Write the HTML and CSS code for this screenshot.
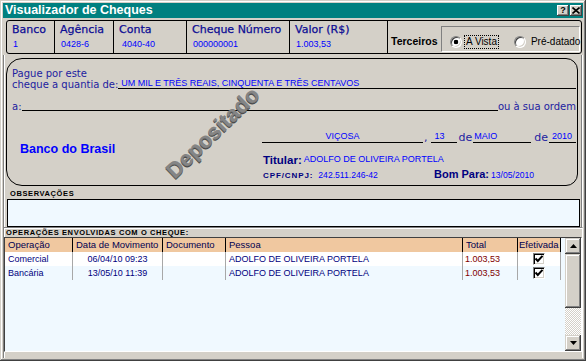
FILE: index.html
```html
<!DOCTYPE html>
<html>
<head>
<meta charset="utf-8">
<title>Visualizador de Cheques</title>
<link rel="stylesheet" href="styles.css">
</head>
<body>
<div class="window">
  <div class="titlebar">
    <span class="title">Visualizador de Cheques</span>
    <div class="tbtns">
      <span class="tbtn">?</span>
      <span class="tbtn"><svg width="8" height="7" viewBox="0 0 8 7"><path d="M0.5 0.5 L7.5 6.5 M7.5 0.5 L0.5 6.5" stroke="#000" stroke-width="1.6"/></svg></span>
    </div>
  </div>
  <div class="client">
    <div class="hdr">
      <div class="hcol w1"><div class="hlabel">Banco</div><div class="hval">1</div></div>
      <div class="hcol w2"><div class="hlabel">Agência</div><div class="hval">0428-6</div></div>
      <div class="hcol w3"><div class="hlabel">Conta</div><div class="hval">4040-40</div></div>
      <div class="hcol w4"><div class="hlabel">Cheque Número</div><div class="hval">000000001</div></div>
      <div class="hcol w5"><div class="hlabel">Valor (R$)</div><div class="hval">1.003,53</div></div>
      <div class="hcol terc">
        <span class="terc-label">Terceiros</span>
        <div class="radiobox">
          <span class="radio on"></span><span class="rlabel focus">A Vista</span>
          <span class="radio r2"></span><span class="rlabel">Pré-datado</span>
        </div>
      </div>
    </div>

    <div class="mainp">
      <div class="cheque">
        <div class="ln1">Pague por este</div>
        <div class="ln2"><span class="lbl">cheque a quantia de:</span><div class="fld amt">UM MIL E TRÊS REAIS, CINQUENTA E TRÊS CENTAVOS</div></div>
        <div class="ln3"><span class="lbl">a:</span><div class="fld"></div><span class="lbl">ou à sua ordem</span></div>
        <div class="ln4">
          <div class="bank">Banco do Brasil</div>
          <div class="rcol">
            <div class="date">
              <div class="fld dfld city">VIÇOSA</div><span class="dsep comma">,</span>
              <div class="fld dfld day">13</div><span class="dsep de1">de</span>
              <div class="fld dfld month">MAIO</div><span class="dsep de2">de</span>
              <div class="fld dfld year">2010</div>
            </div>
            <div class="titular"><span class="blbl">Titular:</span><span class="val">ADOLFO DE OLIVEIRA PORTELA</span></div>
            <div class="cpfrow">
              <div class="cpfgrp"><span class="tiny navy">CPF/CNPJ:</span><span class="val num">242.511.246-42</span></div>
              <span class="blbl2">Bom Para:</span><span class="val num bp">13/05/2010</span>
            </div>
          </div>
        </div>
        <div class="stamp">Depositado</div>
      </div>
      <div class="tiny obs-label">OBSERVAÇÕES</div>
      <div class="obs"></div>
    </div>

    <div class="opsp">
      <div class="tiny ops-label">OPERAÇÕES ENVOLVIDAS COM O CHEQUE:</div>
      <div class="grid">
        <div class="gtable">
          <div class="grow ghead">
            <div>Operação</div><div>Data de Movimento</div><div>Documento</div><div>Pessoa</div><div>Total</div><div class="hef">Efetivada</div>
          </div>
          <div class="grow gr sel">
            <div>Comercial</div><div class="c">06/04/10 09:23</div><div></div><div>ADOLFO DE OLIVEIRA PORTELA</div><div class="tot">1.003,53</div><div class="cb"><span class="chk"><svg width="10" height="10" viewBox="0 0 10 10"><path d="M1.5 4.5 L3.8 7 L8.5 1.8" fill="none" stroke="#000" stroke-width="2"/></svg></span></div>
          </div>
          <div class="grow gr">
            <div>Bancária</div><div class="c">13/05/10 11:39</div><div></div><div>ADOLFO DE OLIVEIRA PORTELA</div><div class="tot">1.003,53</div><div class="cb"><span class="chk"><svg width="10" height="10" viewBox="0 0 10 10"><path d="M1.5 4.5 L3.8 7 L8.5 1.8" fill="none" stroke="#000" stroke-width="2"/></svg></span></div>
          </div>
        </div>
        <div class="sbar">
          <div class="sbtn"><svg width="7" height="4" viewBox="0 0 7 4"><path d="M3.5 0 L7 4 L0 4 Z" fill="#000"/></svg></div>
          <div class="thumb"></div>
          <div class="track"></div>
          <div class="sbtn"><svg width="7" height="4" viewBox="0 0 7 4"><path d="M0 0 L7 0 L3.5 4 Z" fill="#000"/></svg></div>
        </div>
      </div>
    </div>
  </div>
</div>
</body>
</html>
```
FILE: styles.css
```css
* { box-sizing: border-box; margin: 0; padding: 0; }
html, body { width: 586px; height: 361px; overflow: hidden; }
body { background: #d4d0c8; font-family: "DejaVu Sans", sans-serif; }

.window {
  width: 586px; height: 361px; padding: 3px;
  display: flex; flex-direction: column;
  background: #d4d0c8;
  box-shadow: inset -1px -1px 0 #404040, inset 1px 1px 0 #d4d0c8, inset -2px -2px 0 #808080, inset 2px 2px 0 #fff;
}
.titlebar {
  height: 15px; flex: none; background: #008080;
  display: flex; align-items: center; justify-content: space-between;
  padding: 0 1px 0 2px;
}
.title { font: bold 12.5px/15px "Liberation Sans", sans-serif; color: #fff; }
.tbtns { display: flex; gap: 1px; }
.tbtn {
  width: 12px; height: 11px; display: flex; align-items: center; justify-content: center;
  background: #d4d0c8;
  box-shadow: inset -1px -1px 0 #404040, inset 1px 1px 0 #fff, inset -2px -2px 0 #808080;
  font: bold 9px/1 "Liberation Sans", sans-serif; color: #000;
}

.client { flex: 1; display: flex; flex-direction: column; }

/* header strip */
.hdr {
  height: 34px; flex: none; margin: 2px 1px 0 3px;
  border: 1px solid #000; border-radius: 3px; display: flex;
}
.hcol { border-right: 1px solid #000; }
.w1 { width: 48px; } .w2 { width: 59px; } .w3 { width: 73px; } .w4 { width: 103px; } .w5 { width: 98px; }
.hlabel { font: 11px/13px "DejaVu Sans", sans-serif; color: #0c0c94; -webkit-text-stroke: 0.25px #0c0c94; padding: 2px 0 0 5px; white-space: nowrap; }
.hval { font: 9px/10px "Liberation Sans", sans-serif; color: #0000ff; margin-top: 3px; padding-left: 6px; white-space: nowrap; }
.w3 .hval { padding-left: 8px; }
.hcol.terc { flex: 1; border-right: none; display: flex; align-items: flex-start; }
.terc-label { font: bold 10.5px/12px "Liberation Sans", sans-serif; color: #000; margin: 14px 0 0 3px; }
.radiobox {
  margin: 5px 1px 0 auto; width: 139px; height: 26px;
  border: 1px solid; border-color: #808080 #fff #fff #808080;
  display: flex; align-items: center; padding: 5px 0 0 8px;
}
.radio {
  width: 12px; height: 12px; border-radius: 50%; flex: none;
  background: #fff;
  border: 1px solid; border-color: #808080 #fff #fff #808080;
  box-shadow: inset 1px 1px 0 #404040, inset -1px -1px 0 #d4d0c8;
}
.radio.on { background: radial-gradient(circle, #000 0 2px, #fff 2.6px); }
.radio.r2 { margin-left: 16px; }
.rlabel { font: 10px/12px "Liberation Sans", sans-serif; color: #000; margin-left: 3px; padding: 0 1px; white-space: nowrap; }
.r2 + .rlabel { margin-left: 4px; }
.focus { outline: 1px dotted #000; }

/* main panel */
.mainp {
  height: 172px; flex: none; margin-top: 1px;
  border-left: 1px solid #808080; border-right: 1px solid #fff;
  box-shadow: inset 1px 0 0 #fff, inset -1px 0 0 #808080;
  display: flex; flex-direction: column; padding: 3px 4px 0 2px;
}
.cheque {
  height: 128px; flex: none; position: relative;
  border: 1px solid #000; border-radius: 16px 12px 12px 16px;
  padding: 9px 1px 0 5px;
}
.ln1, .lbl { font: 10px/11px "DejaVu Sans", sans-serif; color: #1c1ca0; white-space: nowrap; }
.ln2, .ln3 { display: flex; height: 11px; }
.ln3 { margin-top: 11px; }
.fld { border-bottom: 1px solid #000; flex: 1; height: 10px; }
.amt { font: 9px/8px "Liberation Sans", sans-serif; color: #0000ff; padding-left: 3px; white-space: nowrap; }
.ln4 { display: flex; }
.bank { width: 250px; flex: none; padding: 30px 0 0 8px; font: bold 12.5px/14px "Liberation Sans", sans-serif; color: #0000ff; white-space: nowrap; }
.rcol { flex: 1; padding-top: 19px; }
.date { display: flex; align-items: flex-end; height: 12px; }
.dfld { flex: none; height: 12px; font: 9px/11px "Liberation Sans", sans-serif; color: #0000ff; white-space: nowrap; }
.city { width: 161px; text-align: center; }
.day { width: 26px; padding-left: 4px; }
.month { width: 58px; padding-left: 1px; }
.year { flex: 1; padding-left: 3px; }
.dsep { font: 11px/10px "DejaVu Sans", sans-serif; color: #1c1ca0; flex: none; }
.comma { margin: 0 3px 0 1px; }
.de1 { margin: 0 1px 0 2px; }
.de2 { margin: 0 1px 0 3px; }
.titular { display: flex; align-items: flex-start; margin-top: 11px; padding-left: 1px; }
.blbl { font: bold 11.5px/13px "Liberation Sans", sans-serif; color: #000080; }
.val { font: 9px/10px "Liberation Sans", sans-serif; color: #0000ff; white-space: nowrap; margin-left: 2px; }
.cpfrow { display: flex; align-items: baseline; margin-top: 1px; padding-left: 1px; }
.cpfgrp { width: 171px; flex: none; display: flex; align-items: baseline; }
.cpfgrp .val { margin-left: 5px; }
.blbl2 { font: bold 11px/12px "Liberation Sans", sans-serif; color: #000080; }
.num { font-size: 8.6px; }
.stamp {
  position: absolute; left: 206px; top: 74px;
  transform: translate(-50%, -50%) rotate(-44deg);
  font: bold 22px/1 "Liberation Sans", sans-serif; color: #858585;
  -webkit-text-stroke: 0.4px #777;
  text-shadow: -1px 1px 0 #4a4a4a; white-space: nowrap;
}

.tiny { font: bold 7.5px/8px "Liberation Sans", sans-serif; letter-spacing: 0.6px; color: #000; white-space: nowrap; }
.tiny.navy { color: #000080; letter-spacing: 0.9px; font-size: 8px; }
.obs-label { margin: 4px 0 0 4px; height: 8px; }
.obs { height: 28px; flex: none; margin: 1px -2px 0 1px; border: 1px solid #000; background: #f0f9ff; }

/* operations grid */
.opsp {
  flex: 1; border-top: 1px solid #808080; border-left: 1px solid #808080; border-right: 1px solid #fff;
  box-shadow: inset 0 1px 0 #fff, inset 1px 0 0 #fff;
  padding-top: 1px; display: flex; flex-direction: column;
}
.ops-label { margin-left: 2px; height: 8px; }
.grid {
  height: 115px; flex: none; display: flex;
  border: 1px solid; border-color: #404040 #fff #fff #404040;
  background: #f0f9ff;
}
.gtable { flex: 1; }
.grow { display: grid; grid-template-columns: 68px 90px 63px 237px 55px 43px; height: 14px; width: 556px; }
.ghead { background: #f0c8a0; }
.ghead > div { border-right: 1px solid #000; font: 9.5px/14px "Liberation Sans", sans-serif; color: #000050; padding-left: 3px; white-space: nowrap; overflow: hidden; }
.ghead > .hef { padding-left: 1px; }
.gr > div { border-right: 1px solid #a8a8a8; font: 9px/14px "Liberation Sans", sans-serif; color: #000080; padding-left: 3px; white-space: nowrap; }
.gr.sel { background: #fff; }
.gr > .c { text-align: center; padding-left: 0; }
.gr > .tot { color: #800000; padding-left: 2px; }
.gr > .cb { display: flex; align-items: center; justify-content: center; padding-left: 0; }
.chk {
  width: 12px; height: 12px; background: #fff; display: flex; align-items: center; justify-content: center;
  border: 1px solid; border-color: #808080 #fff #fff #808080;
  box-shadow: inset 1px 1px 0 #000, inset -1px -1px 0 #d4d0c8;
}
.sbar { width: 16px; flex: none; display: flex; flex-direction: column; }
.sbtn, .thumb {
  background: #d4d0c8;
  box-shadow: inset -1px -1px 0 #404040, inset 1px 1px 0 #d4d0c8, inset -2px -2px 0 #808080, inset 2px 2px 0 #fff;
}
.sbtn { height: 16px; flex: none; display: flex; align-items: center; justify-content: center; }
.thumb { height: 54px; flex: none; }
.track { flex: 1; background: repeating-conic-gradient(#ffffff 0 25%, #d4d0c8 0 50%) 0 0 / 2px 2px; }
```
